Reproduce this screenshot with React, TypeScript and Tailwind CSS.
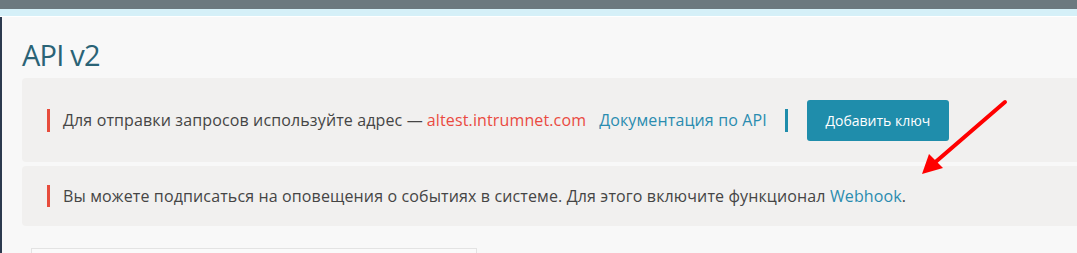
import React from "react";

export default function App() {
  return (
    <div
      className="relative w-full h-[253px] overflow-hidden bg-[#f8f8f8] flex flex-col"
      style={{ fontFamily: '"Open Sans", "Noto Sans", sans-serif' }}
    >
      <div className="h-[9px] bg-[#6c797f] shrink-0" />
      <div className="h-[7px] bg-[#d5f0f8] shrink-0" />
      <div className="h-px bg-white shrink-0" />
      <div className="flex flex-1 min-h-0">
        <div className="w-[2px] bg-[#2c3a4f] shrink-0" />
        <div className="flex-1 pl-[20px] mr-[-10px] flex flex-col">
          <h1 className="shrink-0 mt-[23px] text-[29px] leading-[30px] text-[#2a6376] font-normal tracking-[-0.8px]">
            API v2
          </h1>
          <div className="shrink-0 mt-[8px] h-[84px] rounded-[4px] bg-[#f1f0ef] flex items-center pl-[25px] text-[16px] tracking-[0.13px] text-[#454545]">
            <div className="w-[3px] h-[23px] bg-[#e74c3c] shrink-0" />
            <span className="ml-[13px] whitespace-nowrap">
              Для отправки запросов используйте адрес —{" "}
            </span>
            <span className="ml-[4px] whitespace-nowrap text-[#ea4a41]">
              altest.intrumnet.com
            </span>
            <span className="ml-[13px] whitespace-nowrap text-[#2a8cb0]">
              Документация по API
            </span>
            <div className="ml-[18px] w-[3px] h-[23px] bg-[#1f8dab] shrink-0" />
            <button className="ml-[19px] w-[142px] h-[41px] rounded-[3px] bg-[#1f8dab] text-white text-[14px] tracking-normal shrink-0">
              Добавить ключ
            </button>
          </div>
          <div className="shrink-0 mt-[4px] h-[60px] rounded-[4px] bg-[#f1f0ef] flex items-center pl-[25px] text-[16px] tracking-[0.13px] text-[#454545]">
            <div className="w-[3px] h-[22px] bg-[#e74c3c] shrink-0" />
            <span className="ml-[13px] whitespace-nowrap">
              Вы можете подписаться на оповещения о событиях в системе. Для этого включите функционал{" "}
              <span className="text-[#2a8cb0]">Webhook</span>.
            </span>
          </div>
          <div className="mt-[22px] ml-[9px] w-[446px] h-[40px] border border-[#e3e3e3] bg-[#fafafa] shrink-0" />
        </div>
      </div>
      <svg
        className="absolute left-0 top-0 pointer-events-none"
        width="1077"
        height="253"
        viewBox="0 0 1077 253"
      >
        <line x1="1005" y1="102" x2="932" y2="165" stroke="#ff0000" strokeWidth="4" strokeLinecap="round" />
        <polygon points="922,174 929,154 943,168" fill="#ff0000" />
      </svg>
    </div>
  );
}
